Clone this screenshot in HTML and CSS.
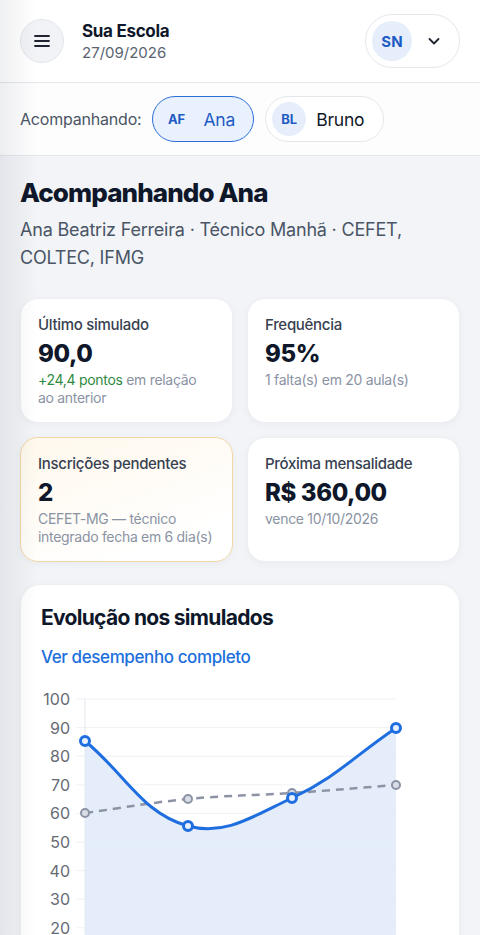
FILE: index.html
```html
<!DOCTYPE html>
<html lang="pt-BR">
<head>
    <meta charset="UTF-8">
    <meta name="viewport" content="width=device-width, initial-scale=1.0">
    <title>Painel do Responsável</title>
    <link rel="stylesheet" href="styles.css">
</head>
<body>
    <header class="topbar">
        <button class="menu-btn" aria-label="Menu">
            <svg width="20" height="20" viewBox="0 0 20 20" fill="none" stroke="#1f2430" stroke-width="1.8" stroke-linecap="round">
                <path d="M3 5h14M3 10h14M3 15h14"/>
            </svg>
        </button>
        <div class="school">
            <div class="school-name">Sua Escola</div>
            <div class="school-date">27/09/2026</div>
        </div>
        <button class="user-pill">
            <span class="avatar avatar-lg">SN</span>
            <svg class="chevron" width="16" height="16" viewBox="0 0 16 16" fill="none" stroke="#1f2430" stroke-width="1.8" stroke-linecap="round" stroke-linejoin="round">
                <path d="M3.5 6l4.5 4.5L12.5 6"/>
            </svg>
        </button>
    </header>

    <div class="students-bar">
        <span class="students-label">Acompanhando:</span>
        <button class="chip chip-active">
            <span class="avatar avatar-sm">AF</span>
            <span>Ana</span>
        </button>
        <button class="chip">
            <span class="avatar avatar-sm">BL</span>
            <span>Bruno</span>
        </button>
    </div>

    <main class="content">
        <h1>Acompanhando Ana</h1>
        <p class="subtitle">Ana Beatriz Ferreira · Técnico Manhã · CEFET, COLTEC, IFMG</p>

        <div class="stats">
            <div class="stat-card">
                <div class="stat-label">Último simulado</div>
                <div class="stat-value">90,0</div>
                <div class="stat-note"><span class="up">+24,4 pontos</span> em relação ao anterior</div>
            </div>
            <div class="stat-card">
                <div class="stat-label">Frequência</div>
                <div class="stat-value">95%</div>
                <div class="stat-note">1 falta(s) em 20 aula(s)</div>
            </div>
            <div class="stat-card stat-warn">
                <div class="stat-label">Inscrições pendentes</div>
                <div class="stat-value">2</div>
                <div class="stat-note">CEFET-MG — técnico integrado fecha em 6 dia(s)</div>
            </div>
            <div class="stat-card">
                <div class="stat-label">Próxima mensalidade</div>
                <div class="stat-value">R$ 360,00</div>
                <div class="stat-note">vence 10/10/2026</div>
            </div>
        </div>

        <section class="chart-card">
            <h2>Evolução nos simulados</h2>
            <a class="chart-link" href="#">Ver desempenho completo</a>
            <svg class="chart" width="397" height="330" viewBox="41 686 397 330">
                <g class="grid">
                    <line x1="77" x2="396" y1="699" y2="699"/>
                    <line x1="77" x2="396" y1="727.6" y2="727.6"/>
                    <line x1="77" x2="396" y1="756.2" y2="756.2"/>
                    <line x1="77" x2="396" y1="784.8" y2="784.8"/>
                    <line x1="77" x2="396" y1="813.4" y2="813.4"/>
                    <line x1="77" x2="396" y1="842" y2="842"/>
                    <line x1="77" x2="396" y1="870.6" y2="870.6"/>
                    <line x1="77" x2="396" y1="899.2" y2="899.2"/>
                    <line x1="77" x2="396" y1="927.8" y2="927.8"/>
                    <line x1="77" x2="396" y1="956.4" y2="956.4"/>
                    <line x1="77" x2="396" y1="985" y2="985"/>
                </g>
                <line class="axis" x1="85" x2="85" y1="699" y2="985"/>
                <g class="ticks">
                    <text x="70" y="705">100</text>
                    <text x="70" y="733.6">90</text>
                    <text x="70" y="762.2">80</text>
                    <text x="70" y="790.8">70</text>
                    <text x="70" y="819.4">60</text>
                    <text x="70" y="848">50</text>
                    <text x="70" y="876.6">40</text>
                    <text x="70" y="905.2">30</text>
                    <text x="70" y="933.8">20</text>
                    <text x="70" y="962.4">10</text>
                    <text x="70" y="991">0</text>
                </g>
                <path class="area" d="M85,741 C126.2,775 142.2,813.4 188,826 C225,836.2 253.5,816.1 292,798 C336.8,776.9 354.4,756 396,728 L396,985 L85,985 Z"/>
                <path class="avg-line" d="M85,813 C126.2,807.4 146.6,803 188,799 C229.4,795 250.4,795.8 292,793 C333.6,790.2 354.4,788.2 396,785"/>
                <g class="avg-dots">
                    <circle cx="85" cy="813" r="4"/>
                    <circle cx="188" cy="799" r="4"/>
                    <circle cx="292" cy="793" r="4"/>
                    <circle cx="396" cy="785" r="4"/>
                </g>
                <path class="score-line" d="M85,741 C126.2,775 142.2,813.4 188,826 C225,836.2 253.5,816.1 292,798 C336.8,776.9 354.4,756 396,728"/>
                <g class="score-dots">
                    <circle cx="85" cy="741" r="4.5"/>
                    <circle cx="188" cy="826" r="4.5"/>
                    <circle cx="292" cy="798" r="4.5"/>
                    <circle cx="396" cy="728" r="4.5"/>
                </g>
            </svg>
        </section>
    </main>
</body>
</html>
```

FILE: styles.css
```css
* {
    font-family: "Inter", "Noto Sans", sans-serif;
    padding: 0;
    margin: 0;
    box-sizing: border-box;
}

body {
    background-color: #f2f4f7;
    color: #0f172a;
    width: 480px;
}

/* sombra suave na borda esquerda */
body::before {
    content: "";
    position: fixed;
    top: 0;
    left: 0;
    bottom: 0;
    width: 36px;
    background: linear-gradient(90deg, rgba(30, 40, 60, 0.07), rgba(30, 40, 60, 0));
    pointer-events: none;
    z-index: 5;
}

button {
    border: none;
    background: none;
    cursor: pointer;
}

.topbar {
    height: 83px;
    background-color: #ffffff;
    border-bottom: 1px solid #e4e7ec;
    display: flex;
    align-items: center;
    padding: 0 20px;
}

.menu-btn {
    width: 44px;
    height: 44px;
    border-radius: 50%;
    background-color: #f1f3f6;
    border: 1px solid #e3e6eb;
    display: flex;
    align-items: center;
    justify-content: center;
}

.school {
    margin-left: 18px;
    flex: 1;
}

.school-name {
    font-size: 17px;
    font-weight: 700;
    letter-spacing: -0.3px;
    line-height: 22px;
}

.school-date {
    font-size: 15px;
    color: #5b6472;
    line-height: 21px;
}

.user-pill {
    height: 54px;
    width: 95px;
    border: 1px solid #e4e7ec;
    border-radius: 27px;
    background-color: #ffffff;
    display: flex;
    align-items: center;
    padding: 0 6px;
    gap: 14px;
}

.avatar {
    border-radius: 50%;
    background-color: #e6eefb;
    color: #1f5bc4;
    font-weight: 700;
    display: flex;
    align-items: center;
    justify-content: center;
}

.avatar-lg {
    width: 40px;
    height: 40px;
    font-size: 15px;
}

.avatar-sm {
    width: 34px;
    height: 34px;
    font-size: 13px;
}

.students-bar {
    height: 73px;
    background-color: #fdfdfe;
    border-bottom: 1px solid #e4e7ec;
    display: flex;
    align-items: center;
    padding: 0 20px;
    gap: 11px;
}

.students-label {
    font-size: 16px;
    color: #4b5563;
    letter-spacing: -0.2px;
}

.chip {
    height: 46px;
    border: 1px solid #e4e7ec;
    border-radius: 23px;
    background-color: #ffffff;
    display: flex;
    align-items: center;
    padding: 0 19px 0 6px;
    gap: 10px;
    font-size: 17.5px;
    color: #111827;
    letter-spacing: -0.2px;
}

.chip-active {
    background-color: #e8f1fd;
    border: 1.5px solid #2b6fd6;
    color: #1f5bc4;
    padding-right: 18px;
}

.chip-active .avatar {
    background-color: transparent;
}

.content {
    padding: 20px 20px 0;
}

h1 {
    font-size: 26px;
    font-weight: 800;
    letter-spacing: -0.9px;
    line-height: 34px;
}

.subtitle {
    margin-top: 6px;
    font-size: 18px;
    line-height: 28px;
    color: #4a5566;
    letter-spacing: -0.2px;
}

.stats {
    margin-top: 26px;
    display: grid;
    grid-template-columns: 1fr 1fr;
    grid-auto-rows: 125px;
    gap: 14px;
}

.stat-card {
    background-color: #ffffff;
    border: 1px solid #eceef2;
    border-radius: 18px;
    padding: 16px 17px;
    box-shadow: 0 2px 8px rgba(20, 30, 50, 0.04);
}

.stat-warn {
    background: linear-gradient(160deg, #fff8ec, #ffffff 80%);
    border-color: #f2d6a4;
}

.stat-label {
    font-size: 15px;
    font-weight: 500;
    line-height: 20px;
    color: #374151;
    letter-spacing: -0.3px;
}

.stat-value {
    margin-top: 4px;
    font-size: 24px;
    font-weight: 800;
    line-height: 30px;
    letter-spacing: -0.4px;
}

.stat-note {
    margin-top: 2px;
    font-size: 14px;
    line-height: 18px;
    color: #8a93a3;
    letter-spacing: -0.3px;
}

.up {
    color: #2f8a3f;
}

.chart-card {
    margin-top: 22px;
    background-color: #ffffff;
    border: 1px solid #eceef2;
    border-radius: 20px;
    padding: 19px 20px 20px 20px;
    box-shadow: 0 2px 8px rgba(20, 30, 50, 0.04);
}

h2 {
    font-size: 21px;
    font-weight: 700;
    line-height: 28px;
    letter-spacing: -0.7px;
}

.chart-link {
    display: block;
    margin-top: 13px;
    font-size: 17px;
    font-weight: 500;
    line-height: 24px;
    color: #1d6fdc;
    text-decoration: none;
    letter-spacing: -0.4px;
}

.chart {
    display: block;
    margin-top: 17px;
}

.grid line {
    stroke: #eef1f6;
    stroke-width: 1;
}

.axis {
    stroke: #e3e6ec;
    stroke-width: 1;
}

.ticks text {
    font-size: 16px;
    fill: #666a73;
    text-anchor: end;
}

.area {
    fill: #e2ebfa;
    opacity: 0.9;
}

.avg-line {
    fill: none;
    stroke: #8b93a5;
    stroke-width: 2.5;
    stroke-dasharray: 8 6;
}

.avg-dots circle {
    fill: #d9dde5;
    stroke: #8b93a5;
    stroke-width: 2;
}

.score-line {
    fill: none;
    stroke: #1f6ee0;
    stroke-width: 3;
}

.score-dots circle {
    fill: #e8f0fd;
    stroke: #1f6ee0;
    stroke-width: 3;
}
```
